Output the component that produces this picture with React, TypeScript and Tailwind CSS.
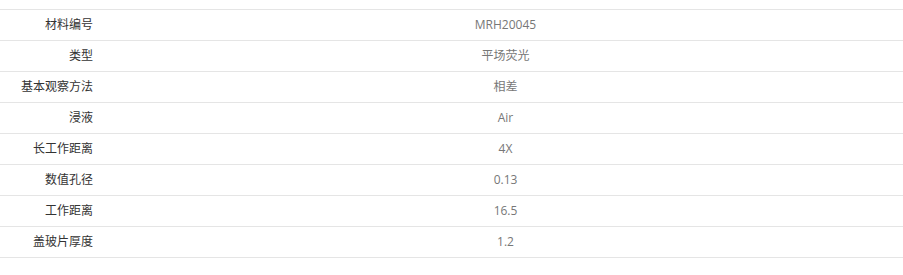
const rows: [string, string][] = [
  ["材料编号", "MRH20045"],
  ["类型", "平场荧光"],
  ["基本观察方法", "相差"],
  ["浸液", "Air"],
  ["长工作距离", "4X"],
  ["数值孔径", "0.13"],
  ["工作距离", "16.5"],
  ["盖玻片厚度", "1.2"],
];

export default function App() {
  return (
    <div
      className="w-[903px] h-[275px] bg-white pt-[9px] text-[12px]"
      style={{ fontFamily: '"Open Sans", "Noto Sans CJK SC", sans-serif' }}
    >
      <div className="border-t border-[#e5e5e5]">
        {rows.map(([label, value]) => (
          <div key={label} className="flex items-center h-[31px] border-b border-[#e5e5e5]">
            <div className="w-[108px] pr-[15px] text-right text-[#333]">{label}</div>
            <div className="flex-1 text-center text-[#777]">{value}</div>
          </div>
        ))}
      </div>
    </div>
  );
}
